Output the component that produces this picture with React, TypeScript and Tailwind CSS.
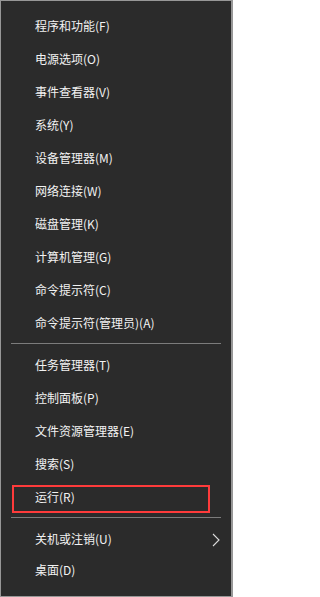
const groups: string[][] = [
  [
    '程序和功能(F)',
    '电源选项(O)',
    '事件查看器(V)',
    '系统(Y)',
    '设备管理器(M)',
    '网络连接(W)',
    '磁盘管理(K)',
    '计算机管理(G)',
    '命令提示符(C)',
    '命令提示符(管理员)(A)',
  ],
  ['任务管理器(T)', '控制面板(P)', '文件资源管理器(E)', '搜索(S)', '运行(R)'],
];

function Item({ label, marked, submenu, short }: { label: string; marked?: boolean; submenu?: boolean; short?: boolean }) {
  return (
    <div className={`relative flex items-center pl-[34px] pr-3 ${short ? 'h-[30px]' : 'h-[33px]'}`}>
      <span className="text-[12px] leading-[16px] text-[#f2f2f2]">{label}</span>
      {submenu && (
        <svg className="absolute right-[11px] top-[11px] h-[14px] w-[8px]" viewBox="0 0 8 14" fill="none" aria-hidden="true">
          <path d="M1 1l6 6-6 6" stroke="#dcdcdc" strokeWidth="1.1" />
        </svg>
      )}
      {marked && (
        <div className="absolute left-[11px] top-[5px] h-[28px] w-[198px] border-2 border-[#ff3b3b]" />
      )}
    </div>
  );
}

function Separator() {
  return <div className="mx-[10px] my-[4px] h-px bg-[#7c7c7c]" />;
}

export default function App() {
  return (
    <div
      className="flex h-[597px] w-[233px] flex-col border border-r-2 border-[#979797] bg-[#2b2b2b] pt-[8px]"
      style={{ fontFamily: '"Noto Sans CJK SC", "Noto Sans", sans-serif' }}
    >
      {groups[0].map((l) => (
        <Item key={l} label={l} />
      ))}
      <Separator />
      {groups[1].map((l) => (
        <Item key={l} label={l} marked={l === '运行(R)'} />
      ))}
      <Separator />
      <Item label="关机或注销(U)" submenu />
      <Item label="桌面(D)" short />
    </div>
  );
}
